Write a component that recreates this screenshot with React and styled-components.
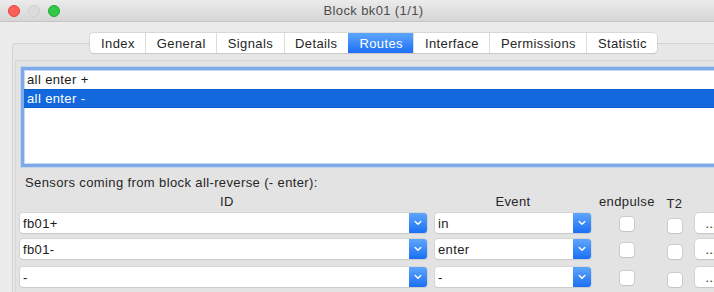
import React from 'react'
import styled, { createGlobalStyle } from 'styled-components'

const GlobalStyle = createGlobalStyle`
  html, body {
    margin: 0;
    padding: 0;
    background: #ececec;
  }
  body {
    font-family: 'Liberation Sans', Arial, sans-serif;
    font-size: 13px;
    letter-spacing: 0.38px;
    color: #262626;
  }
`

const Frame = styled.div`
  width: 714px;
  height: 292px;
  overflow: hidden;
`

const Window = styled.div`
  width: 747px;
  height: 292px;
  display: flex;
  flex-direction: column;
  background: #ececec;
`

const TitleBar = styled.div`
  position: relative;
  height: 21px;
  flex: none;
  display: flex;
  align-items: center;
  justify-content: center;
  background: linear-gradient(#ebebeb, #d6d6d6);
  border-bottom: 1px solid #c4c4c4;
`

const Lights = styled.div`
  position: absolute;
  left: 8px;
  top: 5px;
  display: flex;
  gap: 8px;
`

const Light = styled.span`
  width: 12px;
  height: 12px;
  border-radius: 50%;
  box-sizing: border-box;
  background: ${p => p.color};
  border: 1px solid ${p => p.edge};
`

const Title = styled.div`
  font-size: 13px;
  color: #4d4d4d;
`

const Body = styled.div`
  flex: 1;
  display: flex;
  flex-direction: column;
  padding-top: 11px;
`

const TabBar = styled.div`
  position: relative;
  z-index: 1;
  align-self: center;
  display: flex;
  height: 20px;
  background: #fff;
  border-radius: 4px;
  box-shadow: 0 0 0 0.5px #c4c4c4, 0 1px 1px rgba(0, 0, 0, 0.12);
`

const Tab = styled.div`
  display: flex;
  align-items: center;
  padding: 0 10.5px;
  font-size: 13px;
  color: ${p => (p.active ? '#fff' : '#262626')};
  background: ${p => (p.active ? 'linear-gradient(#5ea6fb, #1b6ff5)' : 'transparent')};
  border-left: 1px solid ${p => (p.first || p.active ? 'transparent' : '#dcdcdc')};
  &:first-child {
    border-radius: 4px 0 0 4px;
  }
  &:last-child {
    border-radius: 0 4px 4px 0;
  }
`

const Pane = styled.div`
  flex: 1;
  margin: -10px 12px 0;
  padding: 16px 0 0 2px;
  background: #e7e7e7;
  border: 1px solid #d3d3d3;
  border-bottom: none;
  border-radius: 4px 4px 0 0;
  display: flex;
`

const Inner = styled.div`
  flex: 1;
  background: #e3e3e3;
  border-top: 1px solid #d6d6d6;
  border-left: 1px solid #d6d6d6;
  display: flex;
  flex-direction: column;
  padding: 6px 6px 0 5px;
`

const List = styled.div`
  height: 100px;
  flex: none;
  box-sizing: border-box;
  background: #fff;
  border: 3px solid #7eaaea;
  box-shadow: inset 0 0 0 1px #c5d9f5, 0 0 0 0.5px #a9c8f1;
  display: flex;
  flex-direction: column;
`

const ListRow = styled.div`
  height: 19px;
  box-sizing: border-box;
  display: flex;
  align-items: center;
  padding-left: 3px;
  font-size: 13px;
  color: ${p => (p.selected ? '#fff' : '#1a1a1a')};
  background: ${p => (p.selected ? '#1368dd' : 'transparent')};
  border-top: 1px solid ${p => (p.selected ? '#0d5fd2' : 'transparent')};
  border-bottom: 1px solid ${p => (p.selected ? '#0d5fd2' : 'transparent')};
`

const Caption = styled.div`
  margin-top: 9px;
  padding-left: 4px;
  height: 14px;
  line-height: 14px;
  color: #262626;
`

const Grid = styled.div`
  display: grid;
  grid-template-columns: 407px 156px 55px 25px 32px;
  column-gap: 8px;
  align-items: center;
  margin-left: -1px;
  height: ${p => p.h}px;
  margin-top: ${p => p.mt || 0}px;
`

const Head = styled.div`
  text-align: center;
  font-size: 13px;
  color: #262626;
  padding-left: ${p => p.pl || 0}px;
  margin-top: ${p => p.mt || 0}px;
`

const Combo = styled.div`
  display: flex;
  height: 20px;
  box-sizing: border-box;
  background: #fff;
  border-radius: 3px;
  box-shadow: 0 0 0 0.5px #c8c8c8, 0 1px 1px rgba(0, 0, 0, 0.1);
`

const ComboText = styled.div`
  flex: 1;
  display: flex;
  align-items: center;
  padding-left: 3px;
  font-size: 13px;
  color: #1a1a1a;
`

const ComboArrow = styled.div`
  width: 18px;
  display: flex;
  align-items: center;
  justify-content: center;
  border-radius: 0 3px 3px 0;
  background: linear-gradient(#5ea6fb, #1b6ff5);
`

const CheckCell = styled.div`
  display: flex;
  justify-content: center;
  align-self: start;
  padding-top: ${p => p.top}px;
`

const Check = styled.div`
  width: 14px;
  height: 14px;
  box-sizing: border-box;
  background: #fff;
  border-radius: 3px;
  box-shadow: 0 0 0 0.5px #b8b8b8, 0 1px 1px rgba(0, 0, 0, 0.08);
`

const DotsButton = styled.div`
  height: 20px;
  background: #fff;
  border-radius: 4px;
  box-shadow: 0 0 0 0.5px #c4c4c4, 0 1px 1px rgba(0, 0, 0, 0.12);
  display: flex;
  align-items: center;
  justify-content: center;
  font-size: 13px;
  letter-spacing: 0;
`

const tabs = ['Index', 'General', 'Signals', 'Details', 'Routes', 'Interface', 'Permissions', 'Statistic']

const rows = [
  { id: 'fb01+', event: 'in', gap: 7 },
  { id: 'fb01-', event: 'enter', gap: 6 },
  { id: '-', event: '-', gap: 8 },
]

function Chevron() {
  return (
    <svg width="8" height="6" viewBox="0 0 8 6">
      <polyline points="1.2,1.5 4,4.3 6.8,1.5" fill="none" stroke="#fff" strokeWidth="1.4" strokeLinecap="round" strokeLinejoin="round" />
    </svg>
  )
}

function ComboBox({ value }) {
  return (
    <Combo>
      <ComboText>{value}</ComboText>
      <ComboArrow>
        <Chevron />
      </ComboArrow>
    </Combo>
  )
}

export default function App() {
  return (
    <Frame>
      <GlobalStyle />
      <Window>
        <TitleBar>
          <Lights>
            <Light color="#fc605c" edge="#e0443e" />
            <Light color="#dcdcdc" edge="#cfcfcf" />
            <Light color="#34c84a" edge="#1eab31" />
          </Lights>
          <Title>Block bk01 (1/1)</Title>
        </TitleBar>
        <Body>
          <TabBar>
            {tabs.map((t, i) => (
              <Tab key={t} first={i === 0} active={t === 'Routes'}>
                {t}
              </Tab>
            ))}
          </TabBar>
          <Pane>
            <Inner>
              <List>
                <ListRow>all enter +</ListRow>
                <ListRow selected>all enter -</ListRow>
              </List>
              <Caption>Sensors coming from block all-reverse (- enter):</Caption>
              <Grid h={14} mt={2}>
                <Head pl={7}>ID</Head>
                <Head>Event</Head>
                <Head>endpulse</Head>
                <Head mt={4}>T2</Head>
                <div />
              </Grid>
              {rows.map((r, i) => (
                <Grid key={i} h={20} mt={r.gap}>
                  <ComboBox value={r.id} />
                  <ComboBox value={r.event} />
                  <CheckCell top={4}>
                    <Check />
                  </CheckCell>
                  <CheckCell top={6}>
                    <Check />
                  </CheckCell>
                  <DotsButton>...</DotsButton>
                </Grid>
              ))}
            </Inner>
          </Pane>
        </Body>
      </Window>
    </Frame>
  )
}
